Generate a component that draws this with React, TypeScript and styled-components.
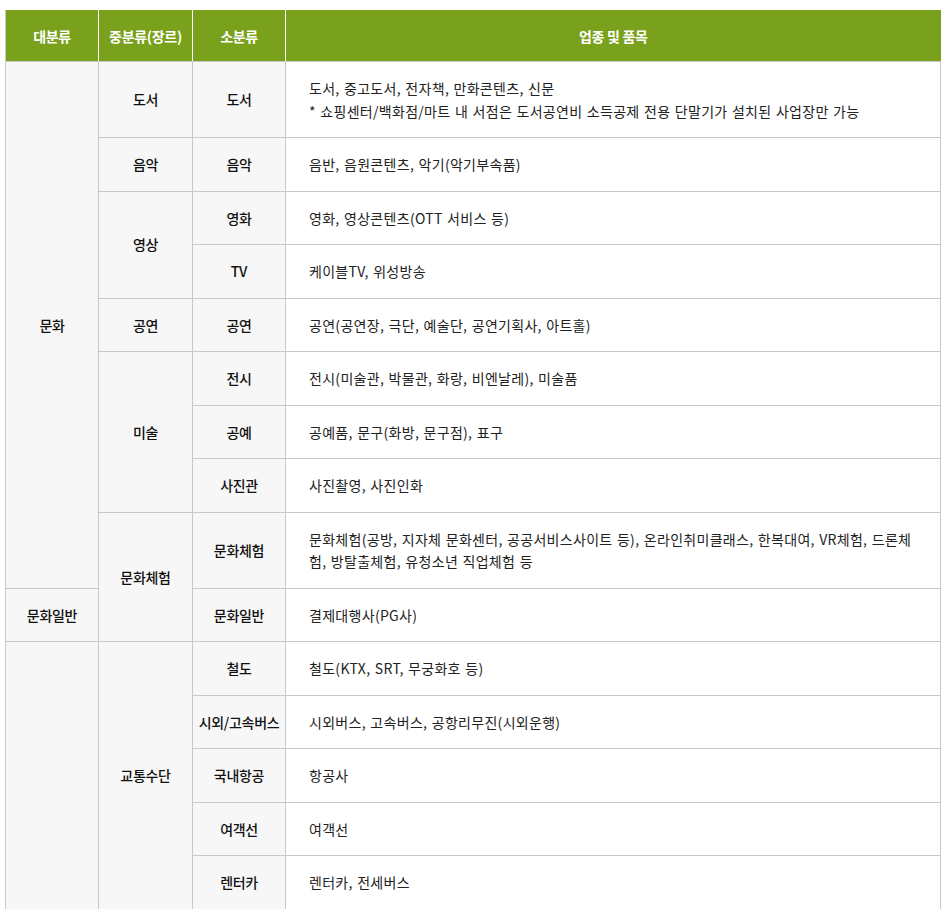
import styled, { createGlobalStyle } from 'styled-components';

const GlobalStyle = createGlobalStyle`
  body {
    margin: 0;
    background: #fff;
    font-family: 'Noto Sans CJK KR', 'Noto Sans', sans-serif;
  }
`;

const Page = styled.div`
  padding: 10px 0 0 5px;
`;

const Table = styled.table`
  width: 936px;
  border-collapse: collapse;
  table-layout: fixed;
  font-size: 14px;
  letter-spacing: -0.3px;
  color: #222;
`;

const HeadCell = styled.th`
  height: 51px;
  padding: 0;
  background: #79a11c;
  color: #fff;
  font-weight: 700;
  text-align: center;
  border-left: 1px solid #fff;
  border-bottom: 1px solid #c8c8c8;
  &:first-child {
    border-left: 1px solid #c8c8c8;
  }
`;

const LabelCell = styled.th`
  padding: 15px 0;
  line-height: 22.5px;
  background: #f7f7f7;
  color: #111;
  font-weight: 500;
  text-align: center;
  vertical-align: middle;
  border: 1px solid #c8c8c8;
`;

const ItemCell = styled.td`
  padding: 15px 22px 15px 23px;
  line-height: 22.5px;
  letter-spacing: 0.3px;
  word-spacing: 1px;
  background: #fff;
  color: #222;
  text-align: left;
  vertical-align: middle;
  border: 1px solid #c8c8c8;
`;

function App() {
  return (
    <Page>
      <GlobalStyle />
      <Table>
        <colgroup>
          <col style={{ width: 93 }} />
          <col style={{ width: 94 }} />
          <col style={{ width: 93 }} />
          <col />
        </colgroup>
        <thead>
          <tr>
            <HeadCell>대분류</HeadCell>
            <HeadCell>중분류(장르)</HeadCell>
            <HeadCell>소분류</HeadCell>
            <HeadCell>업종 및 품목</HeadCell>
          </tr>
        </thead>
        <tbody>
          <tr>
            <LabelCell rowSpan={9}>문화</LabelCell>
            <LabelCell>도서</LabelCell>
            <LabelCell>도서</LabelCell>
            <ItemCell>
              도서, 중고도서, 전자책, 만화콘텐츠, 신문
              <br />* 쇼핑센터/백화점/마트 내 서점은 도서공연비 소득공제 전용 단말기가 설치된 사업장만 가능
            </ItemCell>
          </tr>
          <tr>
            <LabelCell>음악</LabelCell>
            <LabelCell>음악</LabelCell>
            <ItemCell>음반, 음원콘텐츠, 악기(악기부속품)</ItemCell>
          </tr>
          <tr>
            <LabelCell rowSpan={2}>영상</LabelCell>
            <LabelCell>영화</LabelCell>
            <ItemCell>영화, 영상콘텐츠(OTT 서비스 등)</ItemCell>
          </tr>
          <tr>
            <LabelCell>TV</LabelCell>
            <ItemCell>케이블TV, 위성방송</ItemCell>
          </tr>
          <tr>
            <LabelCell>공연</LabelCell>
            <LabelCell>공연</LabelCell>
            <ItemCell>공연(공연장, 극단, 예술단, 공연기획사, 아트홀)</ItemCell>
          </tr>
          <tr>
            <LabelCell rowSpan={3}>미술</LabelCell>
            <LabelCell>전시</LabelCell>
            <ItemCell>전시(미술관, 박물관, 화랑, 비엔날레), 미술품</ItemCell>
          </tr>
          <tr>
            <LabelCell>공예</LabelCell>
            <ItemCell>공예품, 문구(화방, 문구점), 표구</ItemCell>
          </tr>
          <tr>
            <LabelCell>사진관</LabelCell>
            <ItemCell>사진촬영, 사진인화</ItemCell>
          </tr>
          <tr>
            <LabelCell rowSpan={2}>문화체험</LabelCell>
            <LabelCell>문화체험</LabelCell>
            <ItemCell>
              문화체험(공방, 지자체 문화센터, 공공서비스사이트 등), 온라인취미클래스, 한복대여, VR체험, 드론체험, 방탈출체험, 유청소년 직업체험 등
            </ItemCell>
          </tr>
          <tr>
            <LabelCell>문화일반</LabelCell>
            <LabelCell>문화일반</LabelCell>
            <ItemCell>결제대행사(PG사)</ItemCell>
          </tr>
          <tr>
            <LabelCell rowSpan={5} />
            <LabelCell rowSpan={5}>교통수단</LabelCell>
            <LabelCell>철도</LabelCell>
            <ItemCell>철도(KTX, SRT, 무궁화호 등)</ItemCell>
          </tr>
          <tr>
            <LabelCell>시외/고속버스</LabelCell>
            <ItemCell>시외버스, 고속버스, 공항리무진(시외운행)</ItemCell>
          </tr>
          <tr>
            <LabelCell>국내항공</LabelCell>
            <ItemCell>항공사</ItemCell>
          </tr>
          <tr>
            <LabelCell>여객선</LabelCell>
            <ItemCell>여객선</ItemCell>
          </tr>
          <tr>
            <LabelCell>렌터카</LabelCell>
            <ItemCell>렌터카, 전세버스</ItemCell>
          </tr>
        </tbody>
      </Table>
    </Page>
  );
}

export default App;
